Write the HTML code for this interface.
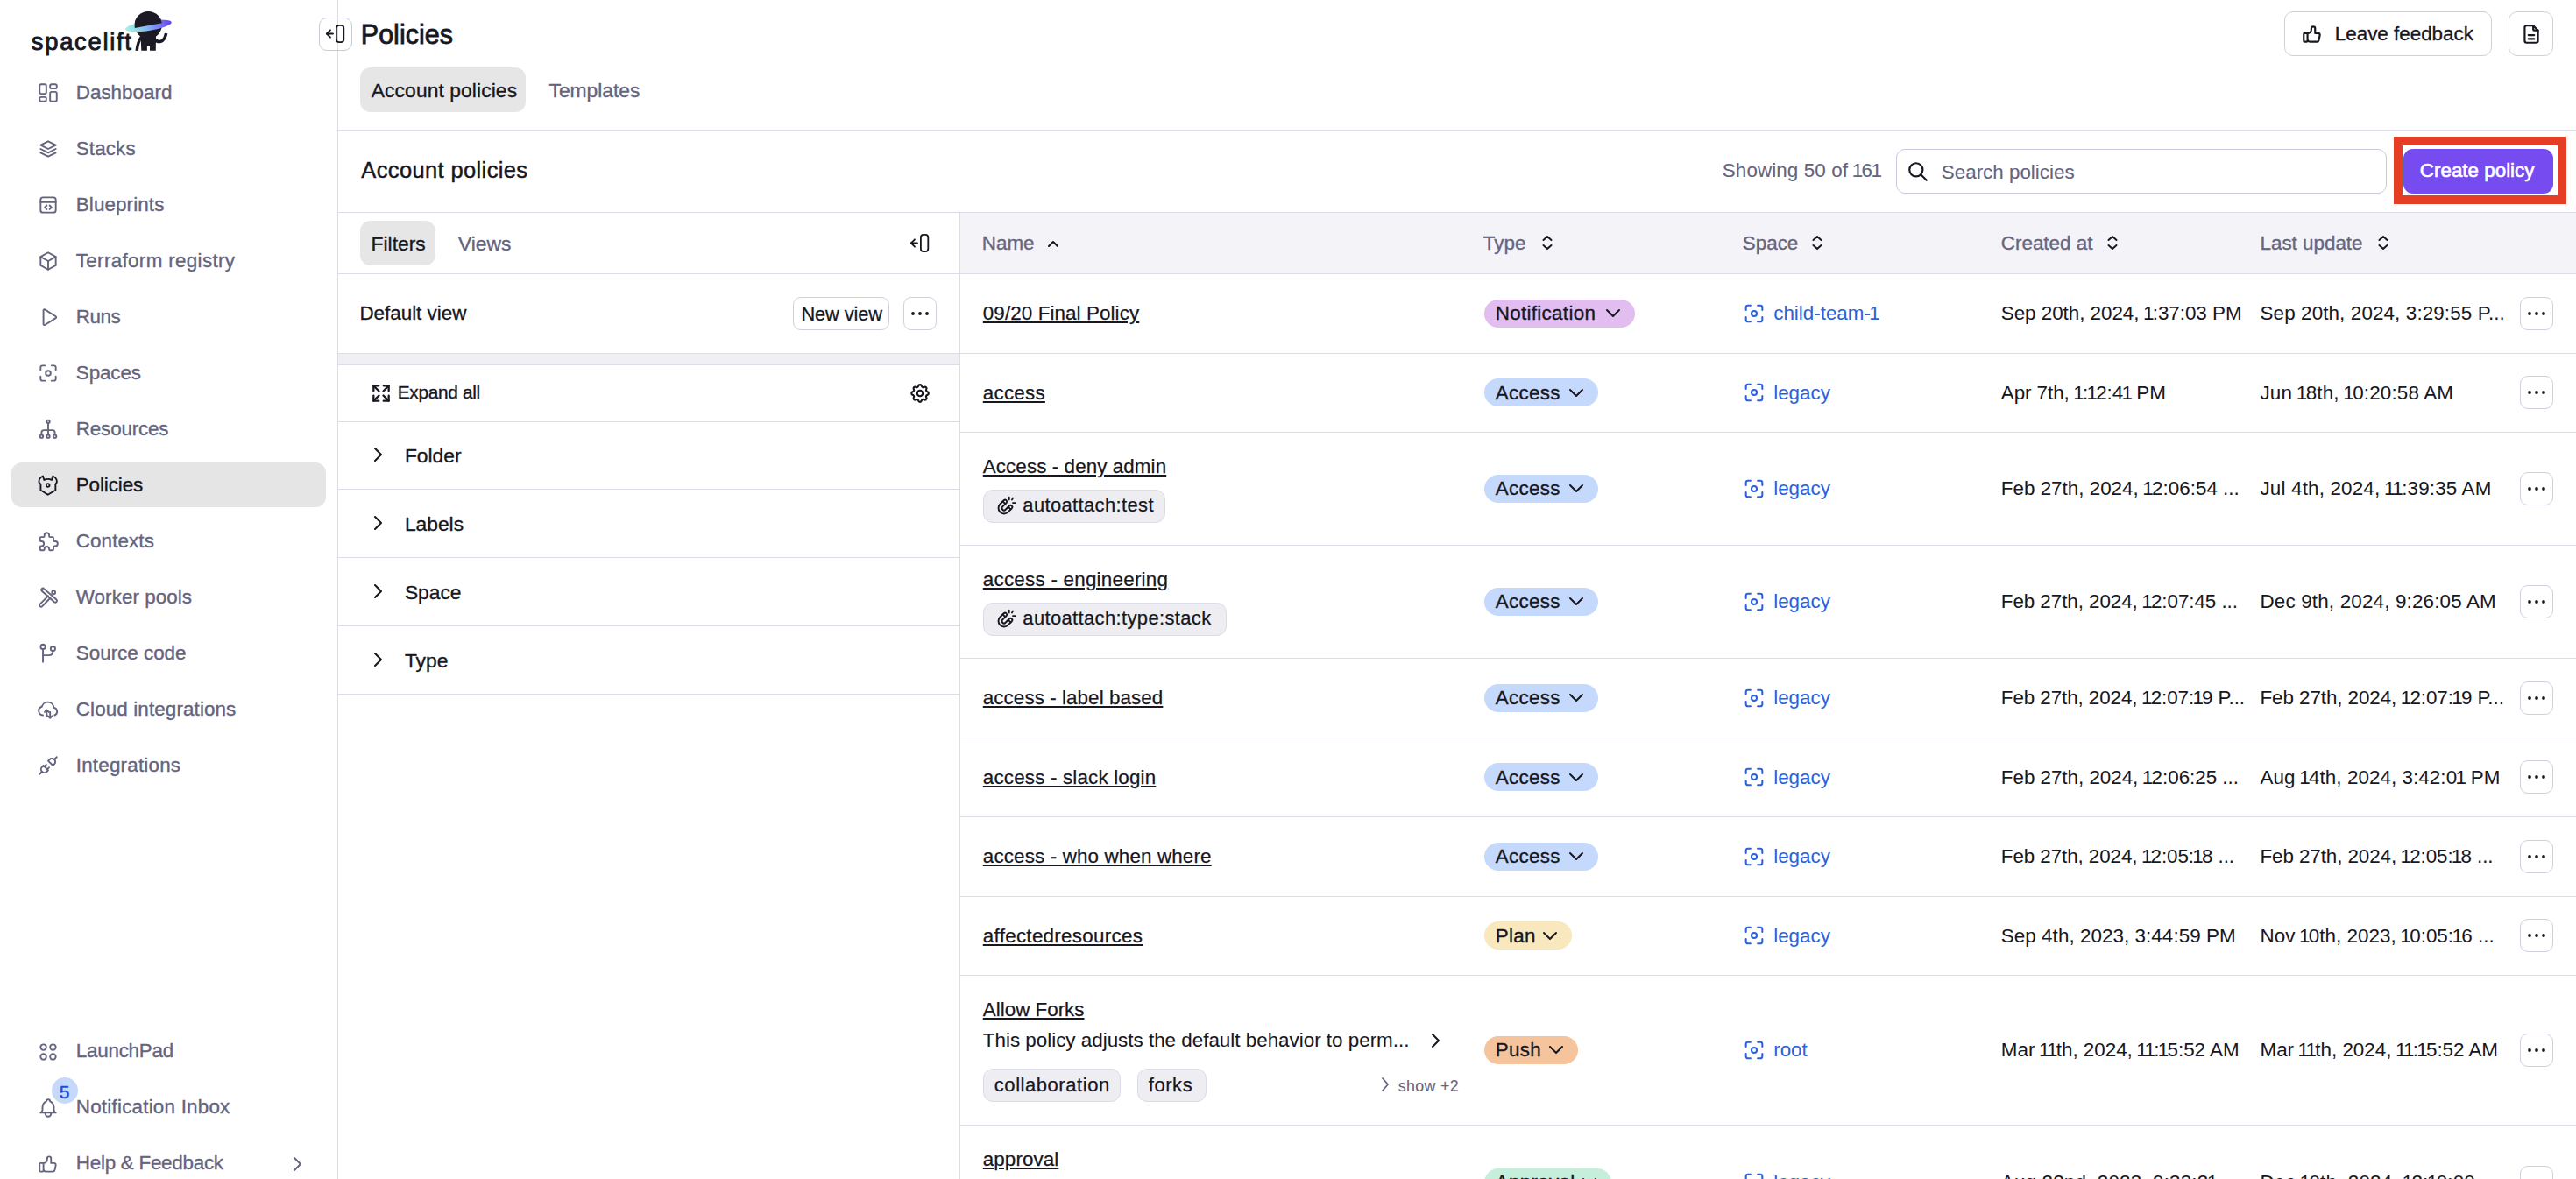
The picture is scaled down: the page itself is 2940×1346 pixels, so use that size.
<!DOCTYPE html>
<html><head><meta charset="utf-8"><title>Policies</title>
<style>
html,body{margin:0;padding:0;background:#ffffff;}
body{width:2940px;height:1346px;position:relative;overflow:hidden;font-family:"Liberation Sans",sans-serif;}
.t{position:absolute;white-space:nowrap;line-height:1;}
.n1{margin:0 -1.7px;}
u{text-decoration:underline;}
svg{display:block}
@media (max-width:2000px){body{zoom:0.5}}
</style></head><body>
<div style="position:absolute;left:385px;top:0px;width:1px;height:1346px;background:#dcdbe8"></div>
<div class="t" style="left:35.8px;top:34.49px;font-size:27.3px;color:#17171f;font-weight:400;-webkit-text-stroke:0.9px #17171f;letter-spacing:1.75px;">spacelift</div>
<svg style="position:absolute;left:0;top:0" width="210" height="70" viewBox="0 0 210 70">
<defs><linearGradient id="rg" x1="143" y1="30" x2="196" y2="25" gradientUnits="userSpaceOnUse"><stop offset="0" stop-color="#a3f7e2"/><stop offset="0.45" stop-color="#84b9f3"/><stop offset="1" stop-color="#6a3bef"/></linearGradient></defs>
<circle cx="169.2" cy="28.6" r="15.6" fill="#1c1b25"/>
<path d="M160.5 40 L178 40 L177.8 57.8 L171 57.8 L171 52.6 Q169.5 51.6 167.9 52.6 L167.9 57.8 L161.3 57.8 Z" fill="#1c1b25"/>
<path d="M161.5 42 C158.5 46 156.8 51 156.2 57.8" stroke="#1c1b25" stroke-width="3.4" fill="none"/>
<path d="M176 44.5 C180 49 187.5 49.5 189.6 38" stroke="#1c1b25" stroke-width="3.6" fill="none"/>
<ellipse cx="169.3" cy="29.4" rx="26.7" ry="5.6" transform="rotate(-8.6 169.3 29.4)" fill="url(#rg)"/>
<path d="M153.9 32.1 A15.6 15.6 0 1 1 184.8 26.3 Z" fill="#1c1b25"/>
</svg>
<div style="position:absolute;left:13px;top:528px;width:359px;height:51px;background:#e5e5e5;border-radius:12px"></div>
<svg style="position:absolute;left:42px;top:93.3px;" width="26" height="26" viewBox="0 0 24 24" fill="none" stroke="#64647e" stroke-width="1.75" stroke-linecap="round" stroke-linejoin="round"><rect x="3" y="3" width="7" height="10" rx="1.6"/><rect x="3" y="16.5" width="7" height="4.5" rx="1.6"/><rect x="14" y="3" width="7" height="4.5" rx="1.6"/><rect x="14" y="11" width="7" height="10" rx="1.6"/></svg>
<div class="t" style="left:86.8px;top:94.84px;font-size:22.4px;color:#64647e;font-weight:400;-webkit-text-stroke:0.35px #64647e;">Dashboard</div>
<svg style="position:absolute;left:42px;top:157.3px;" width="26" height="26" viewBox="0 0 24 24" fill="none" stroke="#64647e" stroke-width="1.75" stroke-linecap="round" stroke-linejoin="round"><path d="M12 4l-8 4l8 4l8 -4l-8 -4"/><path d="M4 12l8 4l8 -4"/><path d="M4 16l8 4l8 -4"/></svg>
<div class="t" style="left:86.8px;top:158.84px;font-size:22.4px;color:#64647e;font-weight:400;-webkit-text-stroke:0.35px #64647e;letter-spacing:0.12px;">Stacks</div>
<svg style="position:absolute;left:42px;top:221.3px;" width="26" height="26" viewBox="0 0 24 24" fill="none" stroke="#64647e" stroke-width="1.75" stroke-linecap="round" stroke-linejoin="round"><rect x="4" y="4" width="16" height="16" rx="2.5"/><path d="M4 9h16"/><path d="M10.5 12.5l-2 2l2 2"/><path d="M13.5 12.5l2 2l-2 2"/></svg>
<div class="t" style="left:86.8px;top:222.84px;font-size:22.4px;color:#64647e;font-weight:400;-webkit-text-stroke:0.35px #64647e;letter-spacing:0.11px;">Blueprints</div>
<svg style="position:absolute;left:42px;top:285.3px;" width="26" height="26" viewBox="0 0 24 24" fill="none" stroke="#64647e" stroke-width="1.75" stroke-linecap="round" stroke-linejoin="round"><path d="M12 3l8 4.5v9l-8 4.5l-8 -4.5v-9z"/><path d="M12 12l8 -4.5"/><path d="M12 12v9"/><path d="M12 12l-8 -4.5"/></svg>
<div class="t" style="left:86.8px;top:286.84px;font-size:22.4px;color:#64647e;font-weight:400;-webkit-text-stroke:0.35px #64647e;letter-spacing:0.34px;">Terraform registry</div>
<svg style="position:absolute;left:42px;top:349.3px;" width="26" height="26" viewBox="0 0 24 24" fill="none" stroke="#64647e" stroke-width="1.75" stroke-linecap="round" stroke-linejoin="round"><path d="M7 4.5v15a1 1 0 0 0 1.5 .8l11.5 -7.3a1 1 0 0 0 0 -1.7l-11.5 -7.3a1 1 0 0 0 -1.5 .8z"/></svg>
<div class="t" style="left:86.8px;top:350.84px;font-size:22.4px;color:#64647e;font-weight:400;-webkit-text-stroke:0.35px #64647e;letter-spacing:-0.43px;">Runs</div>
<svg style="position:absolute;left:42px;top:413.3px;" width="26" height="26" viewBox="0 0 24 24" fill="none" stroke="#64647e" stroke-width="1.75" stroke-linecap="round" stroke-linejoin="round"><circle cx="12" cy="12" r="2.6"/><path d="M4 8.5v-2.5a2 2 0 0 1 2 -2h2.5"/><path d="M4 15.5v2.5a2 2 0 0 0 2 2h2.5"/><path d="M15.5 4h2.5a2 2 0 0 1 2 2v2.5"/><path d="M15.5 20h2.5a2 2 0 0 0 2 -2v-2.5"/></svg>
<div class="t" style="left:86.8px;top:414.84px;font-size:22.4px;color:#64647e;font-weight:400;-webkit-text-stroke:0.35px #64647e;letter-spacing:-0.1px;">Spaces</div>
<svg style="position:absolute;left:42px;top:477.3px;" width="26" height="26" viewBox="0 0 24 24" fill="none" stroke="#64647e" stroke-width="1.75" stroke-linecap="round" stroke-linejoin="round"><circle cx="12" cy="4" r="1.6"/><circle cx="5" cy="19.5" r="1.6"/><circle cx="12" cy="19.5" r="1.6"/><circle cx="19" cy="19.5" r="1.6"/><path d="M12 5.6v12.3"/><path d="M5 17.9v-2.4a2.5 2.5 0 0 1 2.5 -2.5h9a2.5 2.5 0 0 1 2.5 2.5v2.4"/></svg>
<div class="t" style="left:86.8px;top:478.84px;font-size:22.4px;color:#64647e;font-weight:400;-webkit-text-stroke:0.35px #64647e;letter-spacing:-0.16px;">Resources</div>
<svg style="position:absolute;left:42px;top:541.3px;" width="26" height="26" viewBox="0 0 24 24" fill="none" stroke="#17171f" stroke-width="1.75" stroke-linecap="round" stroke-linejoin="round"><path d="M7.7 6.4Q11.7 4.4 15.7 6.4L16.9 2.3Q21.6 4.6 21.1 8.8L19.7 10.9V17.1L11.7 21.9L4.1 17.1V10.9L2.3 8.8Q1.8 4.6 6.5 2.3Z"/><circle cx="11.7" cy="12" r="1.7"/></svg>
<div class="t" style="left:86.8px;top:542.84px;font-size:22.4px;color:#17171f;font-weight:400;-webkit-text-stroke:0.35px #17171f;letter-spacing:-0.11px;">Policies</div>
<svg style="position:absolute;left:42px;top:605.3px;" width="26" height="26" viewBox="0 0 24 24" fill="none" stroke="#64647e" stroke-width="1.75" stroke-linecap="round" stroke-linejoin="round"><path d="M4.5 7.5h2.5a1 1 0 0 0 1 -1v-1a2.5 2.5 0 0 1 5 0v1a1 1 0 0 0 1 1h2.5a1 1 0 0 1 1 1v2.5a1 1 0 0 0 1 1h1a2.5 2.5 0 0 1 0 5h-1a1 1 0 0 0 -1 1v2.5a1 1 0 0 1 -1 1h-2.5a1 1 0 0 1 -1 -1v-.5a2.5 2.5 0 0 0 -5 0v.5a1 1 0 0 1 -1 1h-2.5a1 1 0 0 1 -1 -1v-2.5a1 1 0 0 1 1 -1h.5a2.5 2.5 0 0 0 0 -5h-.5a1 1 0 0 1 -1 -1v-2.5a1 1 0 0 1 1 -1z"/></svg>
<div class="t" style="left:86.8px;top:606.84px;font-size:22.4px;color:#64647e;font-weight:400;-webkit-text-stroke:0.35px #64647e;letter-spacing:0.1px;">Contexts</div>
<svg style="position:absolute;left:42px;top:669.3px;" width="26" height="26" viewBox="0 0 24 24" fill="none" stroke="#64647e" stroke-width="1.75" stroke-linecap="round" stroke-linejoin="round"><path d="M12 10.5L3.4 19a1.6 1.6 0 0 0 2.3 2.3L14.2 12.7"/><path d="M7.6 2.9L20.7 14.3a1.7 1.7 0 0 1 -2.3 2.5L5.4 5.3a1.6 1.6 0 0 1 2.2 -2.4z"/><circle cx="17.7" cy="6.8" r="1.8"/></svg>
<div class="t" style="left:86.8px;top:670.84px;font-size:22.4px;color:#64647e;font-weight:400;-webkit-text-stroke:0.35px #64647e;letter-spacing:0.07px;">Worker pools</div>
<svg style="position:absolute;left:42px;top:733.3px;" width="26" height="26" viewBox="0 0 24 24" fill="none" stroke="#64647e" stroke-width="1.75" stroke-linecap="round" stroke-linejoin="round"><circle cx="6.5" cy="5" r="2.4"/><circle cx="17" cy="7" r="2.4"/><path d="M6.5 7.4V21"/><path d="M17 9.4q0 4.6 -4.5 4.6h-6"/></svg>
<div class="t" style="left:86.8px;top:734.84px;font-size:22.4px;color:#64647e;font-weight:400;-webkit-text-stroke:0.35px #64647e;">Source code</div>
<svg style="position:absolute;left:42px;top:797.3px;" width="26" height="26" viewBox="0 0 24 24" fill="none" stroke="#64647e" stroke-width="1.75" stroke-linecap="round" stroke-linejoin="round"><path d="M6.5 18a4.6 4.6 0 0 1 -1.2 -9a6.5 6.5 0 0 1 12.7 1a4.2 4.2 0 0 1 .8 8"/><path d="M10.5 19v-6.5l-2.2 2.2m2.2 -2.2l2.2 2.2"/><path d="M14 14.5v6.5l-2.2 -2.2m2.2 2.2l2.2 -2.2"/></svg>
<div class="t" style="left:86.8px;top:798.84px;font-size:22.4px;color:#64647e;font-weight:400;-webkit-text-stroke:0.35px #64647e;letter-spacing:0.12px;">Cloud integrations</div>
<svg style="position:absolute;left:42px;top:861.3px;" width="26" height="26" viewBox="0 0 24 24" fill="none" stroke="#64647e" stroke-width="1.75" stroke-linecap="round" stroke-linejoin="round"><path d="M7 12l5 5l-1.5 1.5a3.5 3.5 0 0 1 -5 -5z"/><path d="M17 12l-5 -5l1.5 -1.5a3.5 3.5 0 0 1 5 5z"/><path d="M3 21l2.5 -2.5"/><path d="M18.5 5.5l2.5 -2.5"/><path d="M10 11l-2 2"/><path d="M13 14l-2 2"/></svg>
<div class="t" style="left:86.8px;top:862.84px;font-size:22.4px;color:#64647e;font-weight:400;-webkit-text-stroke:0.35px #64647e;letter-spacing:0.2px;">Integrations</div>
<svg style="position:absolute;left:42px;top:1187.5px;" width="26" height="26" viewBox="0 0 24 24" fill="none" stroke="#64647e" stroke-width="1.75" stroke-linecap="round" stroke-linejoin="round"><circle cx="7" cy="7" r="3"/><circle cx="17" cy="7" r="3"/><circle cx="7" cy="17" r="3"/><circle cx="17" cy="17" r="3"/></svg>
<div class="t" style="left:86.8px;top:1189.04px;font-size:22.4px;color:#64647e;font-weight:400;-webkit-text-stroke:0.35px #64647e;letter-spacing:-0.24px;">LaunchPad</div>
<svg style="position:absolute;left:42px;top:1251.5px;" width="26" height="26" viewBox="0 0 24 24" fill="none" stroke="#64647e" stroke-width="1.75" stroke-linecap="round" stroke-linejoin="round"><path d="M10 5a2 2 0 1 1 4 0a7 7 0 0 1 4 6v3a4 4 0 0 0 2 3h-16a4 4 0 0 0 2 -3v-3a7 7 0 0 1 4 -6"/><path d="M9 17v1a3 3 0 0 0 6 0v-1"/></svg>
<div class="t" style="left:86.8px;top:1253.04px;font-size:22.4px;color:#64647e;font-weight:400;-webkit-text-stroke:0.35px #64647e;letter-spacing:0.22px;">Notification Inbox</div>
<svg style="position:absolute;left:42px;top:1315.5px;" width="26" height="26" viewBox="0 0 24 24" fill="none" stroke="#64647e" stroke-width="1.75" stroke-linecap="round" stroke-linejoin="round"><path d="M7 11v8a1 1 0 0 1 -1 1h-2a1 1 0 0 1 -1 -1v-7a1 1 0 0 1 1 -1h3a4 4 0 0 0 4 -4v-1a2 2 0 0 1 4 0v5h3a2 2 0 0 1 2 2l-1 5a2 3 0 0 1 -2 2h-7a3 3 0 0 1 -3 -3"/></svg>
<div class="t" style="left:86.8px;top:1317.04px;font-size:22.4px;color:#64647e;font-weight:400;-webkit-text-stroke:0.35px #64647e;letter-spacing:-0.25px;">Help &amp; Feedback</div>
<div style="position:absolute;left:58.5px;top:1230px;width:30px;height:30px;background:#c6d9fb;border-radius:50%"></div>
<div class="t" style="left:67.8px;top:1235.72px;font-size:21px;color:#1f4fd6;font-weight:400;-webkit-text-stroke:0.5px #1f4fd6;">5</div>
<svg style="position:absolute;left:330px;top:1318px;" width="20" height="22" viewBox="0 0 20 22" fill="none" stroke="#64647e" stroke-width="2" stroke-linecap="round" stroke-linejoin="round"><path d="M6 4l7 7l-7 7"/></svg>
<div style="position:absolute;left:364px;top:20px;width:38px;height:38px;border:1px solid #c9c9db;border-radius:9px;box-sizing:border-box"></div>
<svg style="position:absolute;left:370.2px;top:26.1px" width="26" height="25" viewBox="0 0 26 25" fill="none" stroke="#17171f" stroke-width="1.8" stroke-linecap="round" stroke-linejoin="round"><rect x="13.9" y="2.9" width="8.4" height="19.2" rx="3.2"/><path d="M2.9 12.5H10"/><path d="M7 8.3L2.9 12.5L7 16.7"/></svg>
<div class="t" style="left:411.8px;top:24.18px;font-size:30.5px;color:#17171f;font-weight:400;-webkit-text-stroke:0.8px #17171f;">Policies</div>
<div style="position:absolute;left:2607px;top:13px;width:237px;height:51px;border:1px solid #cfcfdd;border-radius:10px;box-sizing:border-box"></div>
<svg style="position:absolute;left:2626px;top:26px;" width="26" height="26" viewBox="0 0 24 24" fill="none" stroke="#17171f" stroke-width="2" stroke-linecap="round" stroke-linejoin="round"><path d="M7 11v8a1 1 0 0 1 -1 1h-2a1 1 0 0 1 -1 -1v-7a1 1 0 0 1 1 -1h3a4 4 0 0 0 4 -4v-1a2 2 0 0 1 4 0v5h3a2 2 0 0 1 2 2l-1 5a2 3 0 0 1 -2 2h-7a3 3 0 0 1 -3 -3"/></svg>
<div class="t" style="left:2664.8px;top:28.04px;font-size:22.4px;color:#17171f;font-weight:400;-webkit-text-stroke:0.35px #17171f;">Leave feedback</div>
<div style="position:absolute;left:2863px;top:13px;width:51px;height:51px;border:1px solid #cfcfdd;border-radius:10px;box-sizing:border-box"></div>
<svg style="position:absolute;left:2876px;top:26px;" width="26" height="26" viewBox="0 0 24 24" fill="none" stroke="#17171f" stroke-width="2" stroke-linecap="round" stroke-linejoin="round"><path d="M14 3v4a1 1 0 0 0 1 1h4"/><path d="M17 21h-10a2 2 0 0 1 -2 -2v-14a2 2 0 0 1 2 -2h7l5 5v11a2 2 0 0 1 -2 2z"/><path d="M9 13h6"/><path d="M9 17h6"/></svg>
<div style="position:absolute;left:411px;top:77px;width:189px;height:51px;background:#e6e6e6;border-radius:12px"></div>
<div class="t" style="left:423.8px;top:92.00px;font-size:22.8px;color:#17171f;font-weight:400;-webkit-text-stroke:0.35px #17171f;letter-spacing:0.1px;">Account policies</div>
<div class="t" style="left:626.5px;top:92.00px;font-size:22.8px;color:#64647e;font-weight:400;-webkit-text-stroke:0.35px #64647e;">Templates</div>
<div style="position:absolute;left:386px;top:148px;width:2554px;height:1px;background:#dcdbe8"></div>
<div class="t" style="left:412.3px;top:182.21px;font-size:25.5px;color:#17171f;font-weight:400;-webkit-text-stroke:0.45px #17171f;letter-spacing:0.37px;">Account policies</div>
<div class="t" style="left:1965.8px;top:184.04px;font-size:22.4px;color:#64647e;font-weight:400;-webkit-text-stroke:0.1px #64647e;letter-spacing:0.1px;">Showing 50 of <span class="n1">1</span>6<span class="n1">1</span></div>
<div style="position:absolute;left:2164px;top:170px;width:560px;height:51px;border:1px solid #c9c9db;border-radius:10px;box-sizing:border-box"></div>
<svg style="position:absolute;left:2176px;top:183px;" width="26" height="26" viewBox="0 0 24 24" fill="none" stroke="#17171f" stroke-width="2" stroke-linecap="round" stroke-linejoin="round"><circle cx="10" cy="10" r="7"/><path d="M21 21l-6 -6"/></svg>
<div class="t" style="left:2215.8px;top:186.04px;font-size:22.4px;color:#64647e;font-weight:400;-webkit-text-stroke:0.1px #64647e;">Search policies</div>
<div style="position:absolute;left:2732px;top:156px;width:197px;height:77px;border:10px solid #e63e25;box-sizing:border-box"></div>
<div style="position:absolute;left:2743px;top:170px;width:171px;height:51px;background:#764bf0;border-radius:11px"></div>
<div class="t" style="left:2761.8px;top:183.64px;font-size:22.4px;color:#ffffff;font-weight:400;-webkit-text-stroke:0.6px #ffffff;">Create policy</div>
<div style="position:absolute;left:386px;top:242px;width:2554px;height:1px;background:#dcdbe8"></div>
<div style="position:absolute;left:1095px;top:243px;width:1px;height:1103px;background:#dcdbe8"></div>
<div style="position:absolute;left:411px;top:252px;width:86px;height:51px;background:#e6e6e6;border-radius:12px"></div>
<div class="t" style="left:423.6px;top:267.10px;font-size:22.8px;color:#17171f;font-weight:400;-webkit-text-stroke:0.35px #17171f;">Filters</div>
<div class="t" style="left:523.0px;top:267.10px;font-size:22.8px;color:#64647e;font-weight:400;-webkit-text-stroke:0.35px #64647e;">Views</div>
<svg style="position:absolute;left:1037.1px;top:265.3px" width="26" height="25" viewBox="0 0 26 25" fill="none" stroke="#17171f" stroke-width="1.8" stroke-linecap="round" stroke-linejoin="round"><rect x="13.9" y="2.9" width="8.4" height="19.2" rx="3.2"/><path d="M2.9 12.5H10"/><path d="M7 8.3L2.9 12.5L7 16.7"/></svg>
<div style="position:absolute;left:386px;top:312px;width:709px;height:1px;background:#dcdbe8"></div>
<div class="t" style="left:410.40000000000003px;top:347.24px;font-size:22.4px;color:#17171f;font-weight:400;-webkit-text-stroke:0.3px #17171f;">Default view</div>
<div style="position:absolute;left:905px;top:339px;width:110px;height:38px;border:1px solid #cfcfdd;border-radius:9px;box-sizing:border-box"></div>
<div class="t" style="left:914.4px;top:347.55px;font-size:21.8px;color:#17171f;font-weight:400;-webkit-text-stroke:0.3px #17171f;letter-spacing:-0.1px;">New view</div>
<div style="position:absolute;left:1031px;top:339px;width:38px;height:38px;border:1px solid #cfcfdd;border-radius:9px;box-sizing:border-box"></div>
<svg style="position:absolute;left:1038px;top:354px" width="24" height="8" viewBox="0 0 24 8"><circle cx="4" cy="4" r="1.9" fill="#17171f"/><circle cx="12" cy="4" r="1.9" fill="#17171f"/><circle cx="20" cy="4" r="1.9" fill="#17171f"/></svg>
<div style="position:absolute;left:386px;top:403px;width:709px;height:13px;background:#efeff4"></div>
<div style="position:absolute;left:386px;top:403px;width:709px;height:1px;background:#dcdbe8"></div>
<div style="position:absolute;left:386px;top:416px;width:709px;height:1px;background:#dcdbe8"></div>
<svg style="position:absolute;left:422px;top:436px;" width="26" height="26" viewBox="0 0 24 24" fill="none" stroke="#17171f" stroke-width="2.1" stroke-linecap="round" stroke-linejoin="round"><path d="M14.5 4h5.5v5.5"/><path d="M14.3 9.7l5.7 -5.7"/><path d="M9.5 20h-5.5v-5.5"/><path d="M4 20l5.7 -5.7"/><path d="M14.5 20h5.5v-5.5"/><path d="M14.3 14.3l5.7 5.7"/><path d="M9.5 4h-5.5v5.5"/><path d="M4 4l5.7 5.7"/></svg>
<div class="t" style="left:453.8px;top:438.09px;font-size:20.8px;color:#17171f;font-weight:400;-webkit-text-stroke:0.35px #17171f;letter-spacing:-0.3px;">Expand all</div>
<svg style="position:absolute;left:1037px;top:436px;" width="26" height="26" viewBox="0 0 24 24" fill="none" stroke="#17171f" stroke-width="2" stroke-linecap="round" stroke-linejoin="round"><path d="M10.3 4.3c.4 -1.8 3 -1.8 3.4 0a1.7 1.7 0 0 0 2.6 1.1c1.5 -.9 3.3 .8 2.4 2.4a1.7 1.7 0 0 0 1 2.5c1.8 .4 1.8 3 0 3.4a1.7 1.7 0 0 0 -1 2.6c.9 1.5 -.8 3.3 -2.4 2.4a1.7 1.7 0 0 0 -2.6 1c-.4 1.8 -3 1.8 -3.4 0a1.7 1.7 0 0 0 -2.5 -1c-1.6 .9 -3.3 -.8 -2.4 -2.4a1.7 1.7 0 0 0 -1 -2.6c-1.8 -.4 -1.8 -3 0 -3.4a1.7 1.7 0 0 0 1 -2.5c-.9 -1.6 .8 -3.3 2.4 -2.4c1 .6 2.3 .1 2.5 -1.1z"/><circle cx="12" cy="12" r="3"/></svg>
<div style="position:absolute;left:386px;top:481px;width:709px;height:1px;background:#dcdbe8"></div>
<svg style="position:absolute;left:421px;top:506.6px;" width="20" height="24" viewBox="0 0 20 24" fill="none" stroke="#17171f" stroke-width="2.1" stroke-linecap="round" stroke-linejoin="round"><path d="M7 5l7 7l-7 7"/></svg>
<div class="t" style="left:461.90000000000003px;top:509.30px;font-size:22.8px;color:#17171f;font-weight:400;-webkit-text-stroke:0.35px #17171f;">Folder</div>
<div style="position:absolute;left:386px;top:558px;width:709px;height:1px;background:#dcdbe8"></div>
<svg style="position:absolute;left:421px;top:584.6px;" width="20" height="24" viewBox="0 0 20 24" fill="none" stroke="#17171f" stroke-width="2.1" stroke-linecap="round" stroke-linejoin="round"><path d="M7 5l7 7l-7 7"/></svg>
<div class="t" style="left:461.90000000000003px;top:587.30px;font-size:22.8px;color:#17171f;font-weight:400;-webkit-text-stroke:0.35px #17171f;">Labels</div>
<div style="position:absolute;left:386px;top:636px;width:709px;height:1px;background:#dcdbe8"></div>
<svg style="position:absolute;left:421px;top:662.6px;" width="20" height="24" viewBox="0 0 20 24" fill="none" stroke="#17171f" stroke-width="2.1" stroke-linecap="round" stroke-linejoin="round"><path d="M7 5l7 7l-7 7"/></svg>
<div class="t" style="left:461.90000000000003px;top:665.30px;font-size:22.8px;color:#17171f;font-weight:400;-webkit-text-stroke:0.35px #17171f;">Space</div>
<div style="position:absolute;left:386px;top:714px;width:709px;height:1px;background:#dcdbe8"></div>
<svg style="position:absolute;left:421px;top:740.6px;" width="20" height="24" viewBox="0 0 20 24" fill="none" stroke="#17171f" stroke-width="2.1" stroke-linecap="round" stroke-linejoin="round"><path d="M7 5l7 7l-7 7"/></svg>
<div class="t" style="left:461.90000000000003px;top:743.30px;font-size:22.8px;color:#17171f;font-weight:400;-webkit-text-stroke:0.35px #17171f;">Type</div>
<div style="position:absolute;left:386px;top:792px;width:709px;height:1px;background:#dcdbe8"></div>
<div style="position:absolute;left:1096px;top:243px;width:1844px;height:69px;background:#f4f3f8"></div>
<div style="position:absolute;left:1096px;top:312px;width:1844px;height:1px;background:#dcdbe8"></div>
<div class="t" style="left:1120.8px;top:267.44px;font-size:22.4px;color:#66667f;font-weight:400;-webkit-text-stroke:0.35px #66667f;">Name</div>
<svg style="position:absolute;left:1194px;top:271px;" width="16" height="14" viewBox="0 0 16 14" fill="none" stroke="#17171f" stroke-width="2.1" stroke-linecap="round" stroke-linejoin="round"><path d="M3 10l5 -5l5 5"/></svg>
<div class="t" style="left:1692.8px;top:267.44px;font-size:22.4px;color:#66667f;font-weight:400;-webkit-text-stroke:0.35px #66667f;">Type</div>
<svg style="position:absolute;left:1758px;top:268px;" width="16" height="18" viewBox="0 0 16 18" fill="none" stroke="#17171f" stroke-width="2" stroke-linecap="round" stroke-linejoin="round"><path d="M3.5 6l4.5 -4l4.5 4"/><path d="M3.5 12l4.5 4l4.5 -4"/></svg>
<div class="t" style="left:1988.8px;top:267.44px;font-size:22.4px;color:#66667f;font-weight:400;-webkit-text-stroke:0.35px #66667f;">Space</div>
<svg style="position:absolute;left:2066px;top:268px;" width="16" height="18" viewBox="0 0 16 18" fill="none" stroke="#17171f" stroke-width="2" stroke-linecap="round" stroke-linejoin="round"><path d="M3.5 6l4.5 -4l4.5 4"/><path d="M3.5 12l4.5 4l4.5 -4"/></svg>
<div class="t" style="left:2283.8px;top:267.44px;font-size:22.4px;color:#66667f;font-weight:400;-webkit-text-stroke:0.35px #66667f;">Created at</div>
<svg style="position:absolute;left:2403px;top:268px;" width="16" height="18" viewBox="0 0 16 18" fill="none" stroke="#17171f" stroke-width="2" stroke-linecap="round" stroke-linejoin="round"><path d="M3.5 6l4.5 -4l4.5 4"/><path d="M3.5 12l4.5 4l4.5 -4"/></svg>
<div class="t" style="left:2579.5px;top:267.44px;font-size:22.4px;color:#66667f;font-weight:400;-webkit-text-stroke:0.35px #66667f;">Last update</div>
<svg style="position:absolute;left:2712px;top:268px;" width="16" height="18" viewBox="0 0 16 18" fill="none" stroke="#17171f" stroke-width="2" stroke-linecap="round" stroke-linejoin="round"><path d="M3.5 6l4.5 -4l4.5 4"/><path d="M3.5 12l4.5 4l4.5 -4"/></svg>
<div class="t" style="left:1121.8px;top:347.34px;font-size:22.4px;color:#17171f;font-weight:400;-webkit-text-stroke:0.25px #17171f;letter-spacing:0.097px;text-underline-offset:2px;text-decoration-thickness:2px;"><u>09/20 Final Policy</u></div>
<div style="position:absolute;left:1694px;top:341.5px;width:172px;height:32px;background:#e2bdef;border-radius:16px"></div>
<div class="t" style="left:1706.8px;top:347.34px;font-size:22.4px;color:#17171f;font-weight:400;-webkit-text-stroke:0.35px #17171f;letter-spacing:0.3px;">Notification</div>
<svg style="position:absolute;left:1830px;top:350.0px;" width="22" height="16" viewBox="0 0 22 16" fill="none" stroke="#17171f" stroke-width="2" stroke-linecap="round" stroke-linejoin="round"><path d="M4 4l7 7l7 -7"/></svg>
<svg style="position:absolute;left:1988px;top:343.5px;" width="28" height="28" viewBox="0 0 24 24" fill="none" stroke="#2a62db" stroke-width="1.75" stroke-linecap="round" stroke-linejoin="round"><circle cx="12" cy="12" r="2.6"/><path d="M4 8.5v-2.5a2 2 0 0 1 2 -2h2.5"/><path d="M4 15.5v2.5a2 2 0 0 0 2 2h2.5"/><path d="M15.5 4h2.5a2 2 0 0 1 2 2v2.5"/><path d="M15.5 20h2.5a2 2 0 0 0 2 -2v-2.5"/></svg>
<div class="t" style="left:2024.2px;top:347.34px;font-size:22.4px;color:#2a62db;font-weight:400;-webkit-text-stroke:0.05px #2a62db;">child-team-<span class="n1">1</span></div>
<div class="t" style="left:2283.8px;top:347.34px;font-size:22.4px;color:#17171f;font-weight:400;-webkit-text-stroke:0.05px #17171f;letter-spacing:-0.03px;">Sep 20th, 2024, <span class="n1">1</span>:37:03 PM</div>
<div class="t" style="left:2579.5px;top:347.34px;font-size:22.4px;color:#17171f;font-weight:400;-webkit-text-stroke:0.05px #17171f;letter-spacing:0.123px;">Sep 20th, 2024, 3:29:55 P...</div>
<div style="position:absolute;left:2876px;top:338.5px;width:38px;height:38px;border:1px solid #cfcfdd;border-radius:9px;box-sizing:border-box;background:#fff"></div>
<svg style="position:absolute;left:2883px;top:353.5px" width="24" height="8" viewBox="0 0 24 8"><circle cx="4" cy="4" r="1.9" fill="#17171f"/><circle cx="12" cy="4" r="1.9" fill="#17171f"/><circle cx="20" cy="4" r="1.9" fill="#17171f"/></svg>
<div style="position:absolute;left:1096px;top:403px;width:1844px;height:1px;background:#dcdbe8"></div>
<div class="t" style="left:1121.8px;top:437.84px;font-size:22.4px;color:#17171f;font-weight:400;-webkit-text-stroke:0.25px #17171f;letter-spacing:0.23px;text-underline-offset:2px;text-decoration-thickness:2px;"><u>access</u></div>
<div style="position:absolute;left:1694px;top:432.0px;width:130px;height:32px;background:#c4d9fb;border-radius:16px"></div>
<div class="t" style="left:1706.8px;top:437.84px;font-size:22.4px;color:#17171f;font-weight:400;-webkit-text-stroke:0.35px #17171f;letter-spacing:0.3px;">Access</div>
<svg style="position:absolute;left:1788px;top:440.5px;" width="22" height="16" viewBox="0 0 22 16" fill="none" stroke="#17171f" stroke-width="2" stroke-linecap="round" stroke-linejoin="round"><path d="M4 4l7 7l7 -7"/></svg>
<svg style="position:absolute;left:1988px;top:434.0px;" width="28" height="28" viewBox="0 0 24 24" fill="none" stroke="#2a62db" stroke-width="1.75" stroke-linecap="round" stroke-linejoin="round"><circle cx="12" cy="12" r="2.6"/><path d="M4 8.5v-2.5a2 2 0 0 1 2 -2h2.5"/><path d="M4 15.5v2.5a2 2 0 0 0 2 2h2.5"/><path d="M15.5 4h2.5a2 2 0 0 1 2 2v2.5"/><path d="M15.5 20h2.5a2 2 0 0 0 2 -2v-2.5"/></svg>
<div class="t" style="left:2024.2px;top:437.84px;font-size:22.4px;color:#2a62db;font-weight:400;-webkit-text-stroke:0.05px #2a62db;">legacy</div>
<div class="t" style="left:2283.8px;top:437.84px;font-size:22.4px;color:#17171f;font-weight:400;-webkit-text-stroke:0.05px #17171f;letter-spacing:-0.059px;">Apr 7th, <span class="n1">1</span>:<span class="n1">1</span>2:4<span class="n1">1</span> PM</div>
<div class="t" style="left:2579.5px;top:437.84px;font-size:22.4px;color:#17171f;font-weight:400;-webkit-text-stroke:0.05px #17171f;letter-spacing:0.155px;">Jun <span class="n1">1</span>8th, <span class="n1">1</span>0:20:58 AM</div>
<div style="position:absolute;left:2876px;top:429.0px;width:38px;height:38px;border:1px solid #cfcfdd;border-radius:9px;box-sizing:border-box;background:#fff"></div>
<svg style="position:absolute;left:2883px;top:444.0px" width="24" height="8" viewBox="0 0 24 8"><circle cx="4" cy="4" r="1.9" fill="#17171f"/><circle cx="12" cy="4" r="1.9" fill="#17171f"/><circle cx="20" cy="4" r="1.9" fill="#17171f"/></svg>
<div style="position:absolute;left:1096px;top:493px;width:1844px;height:1px;background:#dcdbe8"></div>
<div class="t" style="left:1121.8px;top:522.24px;font-size:22.4px;color:#17171f;font-weight:400;-webkit-text-stroke:0.25px #17171f;letter-spacing:0.083px;text-underline-offset:2px;text-decoration-thickness:2px;"><u>Access - deny admin</u></div>
<div style="position:absolute;left:1122px;top:558.5px;width:208px;height:38px;background:#ededf2;border:1px solid #dcdbe8;border-radius:11px;box-sizing:border-box"></div>
<svg style="position:absolute;left:1136px;top:566px" width="24" height="24" viewBox="0 0 24 24" fill="none" stroke="#17171f" stroke-width="1.9" stroke-linecap="round" stroke-linejoin="round"><g transform="translate(10.5 13.5) rotate(45) scale(0.8) translate(-12 -12)" stroke-width="2.4"><path d="M4 13v-8a2 2 0 0 1 2 -2h1a2 2 0 0 1 2 2v8a3 3 0 0 0 6 0v-8a2 2 0 0 1 2 -2h1a2 2 0 0 1 2 2v8a8 8 0 0 1 -16 0"/><path d="M4 7.5h5"/><path d="M15 7.5h5"/></g><path d="M15.7 1.8v2.6"/><path d="M20 2.6l-1 1.8"/><path d="M20 8.1h3"/></svg>
<div class="t" style="left:1167.3px;top:566.38px;font-size:22px;color:#17171f;font-weight:400;-webkit-text-stroke:0.25px #17171f;letter-spacing:0.35px;">autoattach:test</div>
<div style="position:absolute;left:1694px;top:541.5px;width:130px;height:32px;background:#c4d9fb;border-radius:16px"></div>
<div class="t" style="left:1706.8px;top:547.34px;font-size:22.4px;color:#17171f;font-weight:400;-webkit-text-stroke:0.35px #17171f;letter-spacing:0.3px;">Access</div>
<svg style="position:absolute;left:1788px;top:550.0px;" width="22" height="16" viewBox="0 0 22 16" fill="none" stroke="#17171f" stroke-width="2" stroke-linecap="round" stroke-linejoin="round"><path d="M4 4l7 7l7 -7"/></svg>
<svg style="position:absolute;left:1988px;top:543.5px;" width="28" height="28" viewBox="0 0 24 24" fill="none" stroke="#2a62db" stroke-width="1.75" stroke-linecap="round" stroke-linejoin="round"><circle cx="12" cy="12" r="2.6"/><path d="M4 8.5v-2.5a2 2 0 0 1 2 -2h2.5"/><path d="M4 15.5v2.5a2 2 0 0 0 2 2h2.5"/><path d="M15.5 4h2.5a2 2 0 0 1 2 2v2.5"/><path d="M15.5 20h2.5a2 2 0 0 0 2 -2v-2.5"/></svg>
<div class="t" style="left:2024.2px;top:547.34px;font-size:22.4px;color:#2a62db;font-weight:400;-webkit-text-stroke:0.05px #2a62db;">legacy</div>
<div class="t" style="left:2283.8px;top:547.34px;font-size:22.4px;color:#17171f;font-weight:400;-webkit-text-stroke:0.05px #17171f;letter-spacing:0.008px;">Feb 27th, 2024, <span class="n1">1</span>2:06:54 ...</div>
<div class="t" style="left:2579.5px;top:547.34px;font-size:22.4px;color:#17171f;font-weight:400;-webkit-text-stroke:0.05px #17171f;letter-spacing:0.166px;">Jul 4th, 2024, <span class="n1">1</span><span class="n1">1</span>:39:35 AM</div>
<div style="position:absolute;left:2876px;top:538.5px;width:38px;height:38px;border:1px solid #cfcfdd;border-radius:9px;box-sizing:border-box;background:#fff"></div>
<svg style="position:absolute;left:2883px;top:553.5px" width="24" height="8" viewBox="0 0 24 8"><circle cx="4" cy="4" r="1.9" fill="#17171f"/><circle cx="12" cy="4" r="1.9" fill="#17171f"/><circle cx="20" cy="4" r="1.9" fill="#17171f"/></svg>
<div style="position:absolute;left:1096px;top:622px;width:1844px;height:1px;background:#dcdbe8"></div>
<div class="t" style="left:1121.8px;top:651.24px;font-size:22.4px;color:#17171f;font-weight:400;-webkit-text-stroke:0.25px #17171f;letter-spacing:0.239px;text-underline-offset:2px;text-decoration-thickness:2px;"><u>access - engineering</u></div>
<div style="position:absolute;left:1122px;top:687.5px;width:278px;height:38px;background:#ededf2;border:1px solid #dcdbe8;border-radius:11px;box-sizing:border-box"></div>
<svg style="position:absolute;left:1136px;top:695px" width="24" height="24" viewBox="0 0 24 24" fill="none" stroke="#17171f" stroke-width="1.9" stroke-linecap="round" stroke-linejoin="round"><g transform="translate(10.5 13.5) rotate(45) scale(0.8) translate(-12 -12)" stroke-width="2.4"><path d="M4 13v-8a2 2 0 0 1 2 -2h1a2 2 0 0 1 2 2v8a3 3 0 0 0 6 0v-8a2 2 0 0 1 2 -2h1a2 2 0 0 1 2 2v8a8 8 0 0 1 -16 0"/><path d="M4 7.5h5"/><path d="M15 7.5h5"/></g><path d="M15.7 1.8v2.6"/><path d="M20 2.6l-1 1.8"/><path d="M20 8.1h3"/></svg>
<div class="t" style="left:1167.3px;top:695.38px;font-size:22px;color:#17171f;font-weight:400;-webkit-text-stroke:0.25px #17171f;letter-spacing:0.35px;">autoattach:type:stack</div>
<div style="position:absolute;left:1694px;top:670.5px;width:130px;height:32px;background:#c4d9fb;border-radius:16px"></div>
<div class="t" style="left:1706.8px;top:676.34px;font-size:22.4px;color:#17171f;font-weight:400;-webkit-text-stroke:0.35px #17171f;letter-spacing:0.3px;">Access</div>
<svg style="position:absolute;left:1788px;top:679.0px;" width="22" height="16" viewBox="0 0 22 16" fill="none" stroke="#17171f" stroke-width="2" stroke-linecap="round" stroke-linejoin="round"><path d="M4 4l7 7l7 -7"/></svg>
<svg style="position:absolute;left:1988px;top:672.5px;" width="28" height="28" viewBox="0 0 24 24" fill="none" stroke="#2a62db" stroke-width="1.75" stroke-linecap="round" stroke-linejoin="round"><circle cx="12" cy="12" r="2.6"/><path d="M4 8.5v-2.5a2 2 0 0 1 2 -2h2.5"/><path d="M4 15.5v2.5a2 2 0 0 0 2 2h2.5"/><path d="M15.5 4h2.5a2 2 0 0 1 2 2v2.5"/><path d="M15.5 20h2.5a2 2 0 0 0 2 -2v-2.5"/></svg>
<div class="t" style="left:2024.2px;top:676.34px;font-size:22.4px;color:#2a62db;font-weight:400;-webkit-text-stroke:0.05px #2a62db;">legacy</div>
<div class="t" style="left:2283.8px;top:676.34px;font-size:22.4px;color:#17171f;font-weight:400;-webkit-text-stroke:0.05px #17171f;letter-spacing:-0.059px;">Feb 27th, 2024, <span class="n1">1</span>2:07:45 ...</div>
<div class="t" style="left:2579.5px;top:676.34px;font-size:22.4px;color:#17171f;font-weight:400;-webkit-text-stroke:0.05px #17171f;letter-spacing:0.172px;">Dec 9th, 2024, 9:26:05 AM</div>
<div style="position:absolute;left:2876px;top:667.5px;width:38px;height:38px;border:1px solid #cfcfdd;border-radius:9px;box-sizing:border-box;background:#fff"></div>
<svg style="position:absolute;left:2883px;top:682.5px" width="24" height="8" viewBox="0 0 24 8"><circle cx="4" cy="4" r="1.9" fill="#17171f"/><circle cx="12" cy="4" r="1.9" fill="#17171f"/><circle cx="20" cy="4" r="1.9" fill="#17171f"/></svg>
<div style="position:absolute;left:1096px;top:751px;width:1844px;height:1px;background:#dcdbe8"></div>
<div class="t" style="left:1121.8px;top:786.34px;font-size:22.4px;color:#17171f;font-weight:400;-webkit-text-stroke:0.25px #17171f;letter-spacing:0.071px;text-underline-offset:2px;text-decoration-thickness:2px;"><u>access - label based</u></div>
<div style="position:absolute;left:1694px;top:780.5px;width:130px;height:32px;background:#c4d9fb;border-radius:16px"></div>
<div class="t" style="left:1706.8px;top:786.34px;font-size:22.4px;color:#17171f;font-weight:400;-webkit-text-stroke:0.35px #17171f;letter-spacing:0.3px;">Access</div>
<svg style="position:absolute;left:1788px;top:789.0px;" width="22" height="16" viewBox="0 0 22 16" fill="none" stroke="#17171f" stroke-width="2" stroke-linecap="round" stroke-linejoin="round"><path d="M4 4l7 7l7 -7"/></svg>
<svg style="position:absolute;left:1988px;top:782.5px;" width="28" height="28" viewBox="0 0 24 24" fill="none" stroke="#2a62db" stroke-width="1.75" stroke-linecap="round" stroke-linejoin="round"><circle cx="12" cy="12" r="2.6"/><path d="M4 8.5v-2.5a2 2 0 0 1 2 -2h2.5"/><path d="M4 15.5v2.5a2 2 0 0 0 2 2h2.5"/><path d="M15.5 4h2.5a2 2 0 0 1 2 2v2.5"/><path d="M15.5 20h2.5a2 2 0 0 0 2 -2v-2.5"/></svg>
<div class="t" style="left:2024.2px;top:786.34px;font-size:22.4px;color:#2a62db;font-weight:400;-webkit-text-stroke:0.05px #2a62db;">legacy</div>
<div class="t" style="left:2283.8px;top:786.34px;font-size:22.4px;color:#17171f;font-weight:400;-webkit-text-stroke:0.05px #17171f;letter-spacing:-0.077px;">Feb 27th, 2024, <span class="n1">1</span>2:07:<span class="n1">1</span>9 P...</div>
<div class="t" style="left:2579.5px;top:786.34px;font-size:22.4px;color:#17171f;font-weight:400;-webkit-text-stroke:0.05px #17171f;letter-spacing:-0.074px;">Feb 27th, 2024, <span class="n1">1</span>2:07:<span class="n1">1</span>9 P...</div>
<div style="position:absolute;left:2876px;top:777.5px;width:38px;height:38px;border:1px solid #cfcfdd;border-radius:9px;box-sizing:border-box;background:#fff"></div>
<svg style="position:absolute;left:2883px;top:792.5px" width="24" height="8" viewBox="0 0 24 8"><circle cx="4" cy="4" r="1.9" fill="#17171f"/><circle cx="12" cy="4" r="1.9" fill="#17171f"/><circle cx="20" cy="4" r="1.9" fill="#17171f"/></svg>
<div style="position:absolute;left:1096px;top:842px;width:1844px;height:1px;background:#dcdbe8"></div>
<div class="t" style="left:1121.8px;top:876.84px;font-size:22.4px;color:#17171f;font-weight:400;-webkit-text-stroke:0.25px #17171f;letter-spacing:0.171px;text-underline-offset:2px;text-decoration-thickness:2px;"><u>access - slack login</u></div>
<div style="position:absolute;left:1694px;top:871.0px;width:130px;height:32px;background:#c4d9fb;border-radius:16px"></div>
<div class="t" style="left:1706.8px;top:876.84px;font-size:22.4px;color:#17171f;font-weight:400;-webkit-text-stroke:0.35px #17171f;letter-spacing:0.3px;">Access</div>
<svg style="position:absolute;left:1788px;top:879.5px;" width="22" height="16" viewBox="0 0 22 16" fill="none" stroke="#17171f" stroke-width="2" stroke-linecap="round" stroke-linejoin="round"><path d="M4 4l7 7l7 -7"/></svg>
<svg style="position:absolute;left:1988px;top:873.0px;" width="28" height="28" viewBox="0 0 24 24" fill="none" stroke="#2a62db" stroke-width="1.75" stroke-linecap="round" stroke-linejoin="round"><circle cx="12" cy="12" r="2.6"/><path d="M4 8.5v-2.5a2 2 0 0 1 2 -2h2.5"/><path d="M4 15.5v2.5a2 2 0 0 0 2 2h2.5"/><path d="M15.5 4h2.5a2 2 0 0 1 2 2v2.5"/><path d="M15.5 20h2.5a2 2 0 0 0 2 -2v-2.5"/></svg>
<div class="t" style="left:2024.2px;top:876.84px;font-size:22.4px;color:#2a62db;font-weight:400;-webkit-text-stroke:0.05px #2a62db;">legacy</div>
<div class="t" style="left:2283.8px;top:876.84px;font-size:22.4px;color:#17171f;font-weight:400;-webkit-text-stroke:0.05px #17171f;letter-spacing:-0.022px;">Feb 27th, 2024, <span class="n1">1</span>2:06:25 ...</div>
<div class="t" style="left:2579.5px;top:876.84px;font-size:22.4px;color:#17171f;font-weight:400;-webkit-text-stroke:0.05px #17171f;letter-spacing:0.066px;">Aug <span class="n1">1</span>4th, 2024, 3:42:0<span class="n1">1</span> PM</div>
<div style="position:absolute;left:2876px;top:868.0px;width:38px;height:38px;border:1px solid #cfcfdd;border-radius:9px;box-sizing:border-box;background:#fff"></div>
<svg style="position:absolute;left:2883px;top:883.0px" width="24" height="8" viewBox="0 0 24 8"><circle cx="4" cy="4" r="1.9" fill="#17171f"/><circle cx="12" cy="4" r="1.9" fill="#17171f"/><circle cx="20" cy="4" r="1.9" fill="#17171f"/></svg>
<div style="position:absolute;left:1096px;top:932px;width:1844px;height:1px;background:#dcdbe8"></div>
<div class="t" style="left:1121.8px;top:967.34px;font-size:22.4px;color:#17171f;font-weight:400;-webkit-text-stroke:0.25px #17171f;letter-spacing:0.141px;text-underline-offset:2px;text-decoration-thickness:2px;"><u>access - who when where</u></div>
<div style="position:absolute;left:1694px;top:961.5px;width:130px;height:32px;background:#c4d9fb;border-radius:16px"></div>
<div class="t" style="left:1706.8px;top:967.34px;font-size:22.4px;color:#17171f;font-weight:400;-webkit-text-stroke:0.35px #17171f;letter-spacing:0.3px;">Access</div>
<svg style="position:absolute;left:1788px;top:970.0px;" width="22" height="16" viewBox="0 0 22 16" fill="none" stroke="#17171f" stroke-width="2" stroke-linecap="round" stroke-linejoin="round"><path d="M4 4l7 7l7 -7"/></svg>
<svg style="position:absolute;left:1988px;top:963.5px;" width="28" height="28" viewBox="0 0 24 24" fill="none" stroke="#2a62db" stroke-width="1.75" stroke-linecap="round" stroke-linejoin="round"><circle cx="12" cy="12" r="2.6"/><path d="M4 8.5v-2.5a2 2 0 0 1 2 -2h2.5"/><path d="M4 15.5v2.5a2 2 0 0 0 2 2h2.5"/><path d="M15.5 4h2.5a2 2 0 0 1 2 2v2.5"/><path d="M15.5 20h2.5a2 2 0 0 0 2 -2v-2.5"/></svg>
<div class="t" style="left:2024.2px;top:967.34px;font-size:22.4px;color:#2a62db;font-weight:400;-webkit-text-stroke:0.05px #2a62db;">legacy</div>
<div class="t" style="left:2283.8px;top:967.34px;font-size:22.4px;color:#17171f;font-weight:400;-webkit-text-stroke:0.05px #17171f;letter-spacing:-0.081px;">Feb 27th, 2024, <span class="n1">1</span>2:05:<span class="n1">1</span>8 ...</div>
<div class="t" style="left:2579.5px;top:967.34px;font-size:22.4px;color:#17171f;font-weight:400;-webkit-text-stroke:0.05px #17171f;letter-spacing:-0.089px;">Feb 27th, 2024, <span class="n1">1</span>2:05:<span class="n1">1</span>8 ...</div>
<div style="position:absolute;left:2876px;top:958.5px;width:38px;height:38px;border:1px solid #cfcfdd;border-radius:9px;box-sizing:border-box;background:#fff"></div>
<svg style="position:absolute;left:2883px;top:973.5px" width="24" height="8" viewBox="0 0 24 8"><circle cx="4" cy="4" r="1.9" fill="#17171f"/><circle cx="12" cy="4" r="1.9" fill="#17171f"/><circle cx="20" cy="4" r="1.9" fill="#17171f"/></svg>
<div style="position:absolute;left:1096px;top:1023px;width:1844px;height:1px;background:#dcdbe8"></div>
<div class="t" style="left:1121.8px;top:1057.84px;font-size:22.4px;color:#17171f;font-weight:400;-webkit-text-stroke:0.25px #17171f;letter-spacing:0.287px;text-underline-offset:2px;text-decoration-thickness:2px;"><u>affectedresources</u></div>
<div style="position:absolute;left:1694px;top:1052.0px;width:100px;height:32px;background:#f9e8bd;border-radius:16px"></div>
<div class="t" style="left:1706.8px;top:1057.84px;font-size:22.4px;color:#17171f;font-weight:400;-webkit-text-stroke:0.35px #17171f;letter-spacing:0.3px;">Plan</div>
<svg style="position:absolute;left:1758px;top:1060.5px;" width="22" height="16" viewBox="0 0 22 16" fill="none" stroke="#17171f" stroke-width="2" stroke-linecap="round" stroke-linejoin="round"><path d="M4 4l7 7l7 -7"/></svg>
<svg style="position:absolute;left:1988px;top:1054.0px;" width="28" height="28" viewBox="0 0 24 24" fill="none" stroke="#2a62db" stroke-width="1.75" stroke-linecap="round" stroke-linejoin="round"><circle cx="12" cy="12" r="2.6"/><path d="M4 8.5v-2.5a2 2 0 0 1 2 -2h2.5"/><path d="M4 15.5v2.5a2 2 0 0 0 2 2h2.5"/><path d="M15.5 4h2.5a2 2 0 0 1 2 2v2.5"/><path d="M15.5 20h2.5a2 2 0 0 0 2 -2v-2.5"/></svg>
<div class="t" style="left:2024.2px;top:1057.84px;font-size:22.4px;color:#2a62db;font-weight:400;-webkit-text-stroke:0.05px #2a62db;">legacy</div>
<div class="t" style="left:2283.8px;top:1057.84px;font-size:22.4px;color:#17171f;font-weight:400;-webkit-text-stroke:0.05px #17171f;letter-spacing:0.059px;">Sep 4th, 2023, 3:44:59 PM</div>
<div class="t" style="left:2579.5px;top:1057.84px;font-size:22.4px;color:#17171f;font-weight:400;-webkit-text-stroke:0.05px #17171f;letter-spacing:0.034px;">Nov <span class="n1">1</span>0th, 2023, <span class="n1">1</span>0:05:<span class="n1">1</span>6 ...</div>
<div style="position:absolute;left:2876px;top:1049.0px;width:38px;height:38px;border:1px solid #cfcfdd;border-radius:9px;box-sizing:border-box;background:#fff"></div>
<svg style="position:absolute;left:2883px;top:1064.0px" width="24" height="8" viewBox="0 0 24 8"><circle cx="4" cy="4" r="1.9" fill="#17171f"/><circle cx="12" cy="4" r="1.9" fill="#17171f"/><circle cx="20" cy="4" r="1.9" fill="#17171f"/></svg>
<div style="position:absolute;left:1096px;top:1113px;width:1844px;height:1px;background:#dcdbe8"></div>
<div class="t" style="left:1121.8px;top:1142.04px;font-size:22.4px;color:#17171f;font-weight:400;-webkit-text-stroke:0.25px #17171f;text-underline-offset:2px;text-decoration-thickness:2px;"><u>Allow Forks</u></div>
<div class="t" style="left:1121.8px;top:1177.04px;font-size:22.4px;color:#17171f;font-weight:400;-webkit-text-stroke:0.1px #17171f;">This policy adjusts the default behavior to perm...</div>
<svg style="position:absolute;left:1630px;top:1176px;" width="16" height="24" viewBox="0 0 16 24" fill="none" stroke="#17171f" stroke-width="2" stroke-linecap="round" stroke-linejoin="round"><path d="M5 5l7 7l-7 7"/></svg>
<div style="position:absolute;left:1122px;top:1220px;width:157px;height:38px;background:#ededf2;border:1px solid #dcdbe8;border-radius:11px;box-sizing:border-box"></div>
<div class="t" style="left:1134.8px;top:1227.68px;font-size:22px;color:#17171f;font-weight:400;-webkit-text-stroke:0.25px #17171f;letter-spacing:0.55px;">collaboration</div>
<div style="position:absolute;left:1298px;top:1220px;width:79px;height:38px;background:#ededf2;border:1px solid #dcdbe8;border-radius:11px;box-sizing:border-box"></div>
<div class="t" style="left:1310.8px;top:1227.68px;font-size:22px;color:#17171f;font-weight:400;-webkit-text-stroke:0.25px #17171f;letter-spacing:0.55px;">forks</div>
<svg style="position:absolute;left:1574px;top:1228px;" width="14" height="20" viewBox="0 0 14 20" fill="none" stroke="#64647e" stroke-width="1.8" stroke-linecap="round" stroke-linejoin="round"><path d="M4 3l6 7l-6 7"/></svg>
<div class="t" style="left:1595.8px;top:1231.73px;font-size:17.8px;color:#64647e;font-weight:400;-webkit-text-stroke:0.1px #64647e;letter-spacing:0.35px;">show +2</div>
<div style="position:absolute;left:1694px;top:1182.5px;width:107px;height:32px;background:#f5c49d;border-radius:16px"></div>
<div class="t" style="left:1706.8px;top:1188.34px;font-size:22.4px;color:#17171f;font-weight:400;-webkit-text-stroke:0.35px #17171f;letter-spacing:0.3px;">Push</div>
<svg style="position:absolute;left:1765px;top:1191.0px;" width="22" height="16" viewBox="0 0 22 16" fill="none" stroke="#17171f" stroke-width="2" stroke-linecap="round" stroke-linejoin="round"><path d="M4 4l7 7l7 -7"/></svg>
<svg style="position:absolute;left:1988px;top:1184.5px;" width="28" height="28" viewBox="0 0 24 24" fill="none" stroke="#2a62db" stroke-width="1.75" stroke-linecap="round" stroke-linejoin="round"><circle cx="12" cy="12" r="2.6"/><path d="M4 8.5v-2.5a2 2 0 0 1 2 -2h2.5"/><path d="M4 15.5v2.5a2 2 0 0 0 2 2h2.5"/><path d="M15.5 4h2.5a2 2 0 0 1 2 2v2.5"/><path d="M15.5 20h2.5a2 2 0 0 0 2 -2v-2.5"/></svg>
<div class="t" style="left:2024.2px;top:1188.34px;font-size:22.4px;color:#2a62db;font-weight:400;-webkit-text-stroke:0.05px #2a62db;">root</div>
<div class="t" style="left:2283.8px;top:1188.34px;font-size:22.4px;color:#17171f;font-weight:400;-webkit-text-stroke:0.05px #17171f;letter-spacing:-0.005px;">Mar <span class="n1">1</span><span class="n1">1</span>th, 2024, <span class="n1">1</span><span class="n1">1</span>:<span class="n1">1</span>5:52 AM</div>
<div class="t" style="left:2579.5px;top:1188.34px;font-size:22.4px;color:#17171f;font-weight:400;-webkit-text-stroke:0.05px #17171f;letter-spacing:-0.016px;">Mar <span class="n1">1</span><span class="n1">1</span>th, 2024, <span class="n1">1</span><span class="n1">1</span>:<span class="n1">1</span>5:52 AM</div>
<div style="position:absolute;left:2876px;top:1179.5px;width:38px;height:38px;border:1px solid #cfcfdd;border-radius:9px;box-sizing:border-box;background:#fff"></div>
<svg style="position:absolute;left:2883px;top:1194.5px" width="24" height="8" viewBox="0 0 24 8"><circle cx="4" cy="4" r="1.9" fill="#17171f"/><circle cx="12" cy="4" r="1.9" fill="#17171f"/><circle cx="20" cy="4" r="1.9" fill="#17171f"/></svg>
<div style="position:absolute;left:1096px;top:1284px;width:1844px;height:1px;background:#dcdbe8"></div>
<div class="t" style="left:1121.8px;top:1313.04px;font-size:22.4px;color:#17171f;font-weight:400;-webkit-text-stroke:0.25px #17171f;letter-spacing:0.079px;text-underline-offset:2px;text-decoration-thickness:2px;"><u>approval</u></div>
<div style="position:absolute;left:1694px;top:1333.5px;width:145px;height:32px;background:#c5eedb;border-radius:16px"></div>
<div class="t" style="left:1706.8px;top:1339.34px;font-size:22.4px;color:#17171f;font-weight:400;-webkit-text-stroke:0.35px #17171f;letter-spacing:0.3px;">Approval</div>
<svg style="position:absolute;left:1803px;top:1342.0px;" width="22" height="16" viewBox="0 0 22 16" fill="none" stroke="#17171f" stroke-width="2" stroke-linecap="round" stroke-linejoin="round"><path d="M4 4l7 7l7 -7"/></svg>
<svg style="position:absolute;left:1988px;top:1335.5px;" width="28" height="28" viewBox="0 0 24 24" fill="none" stroke="#2a62db" stroke-width="1.75" stroke-linecap="round" stroke-linejoin="round"><circle cx="12" cy="12" r="2.6"/><path d="M4 8.5v-2.5a2 2 0 0 1 2 -2h2.5"/><path d="M4 15.5v2.5a2 2 0 0 0 2 2h2.5"/><path d="M15.5 4h2.5a2 2 0 0 1 2 2v2.5"/><path d="M15.5 20h2.5a2 2 0 0 0 2 -2v-2.5"/></svg>
<div class="t" style="left:2024.2px;top:1339.34px;font-size:22.4px;color:#2a62db;font-weight:400;-webkit-text-stroke:0.05px #2a62db;">legacy</div>
<div class="t" style="left:2283.8px;top:1339.34px;font-size:22.4px;color:#17171f;font-weight:400;-webkit-text-stroke:0.05px #17171f;letter-spacing:0.168px;">Aug 22nd, 2023, 9:33:2<span class="n1">1</span> ...</div>
<div class="t" style="left:2579.5px;top:1339.34px;font-size:22.4px;color:#17171f;font-weight:400;-webkit-text-stroke:0.05px #17171f;letter-spacing:0.167px;">Dec <span class="n1">1</span>0th, 2024, <span class="n1">1</span>2:<span class="n1">1</span>0:00 ...</div>
<div style="position:absolute;left:2876px;top:1330.5px;width:38px;height:38px;border:1px solid #cfcfdd;border-radius:9px;box-sizing:border-box;background:#fff"></div>
<svg style="position:absolute;left:2883px;top:1345.5px" width="24" height="8" viewBox="0 0 24 8"><circle cx="4" cy="4" r="1.9" fill="#17171f"/><circle cx="12" cy="4" r="1.9" fill="#17171f"/><circle cx="20" cy="4" r="1.9" fill="#17171f"/></svg>
</body></html>
